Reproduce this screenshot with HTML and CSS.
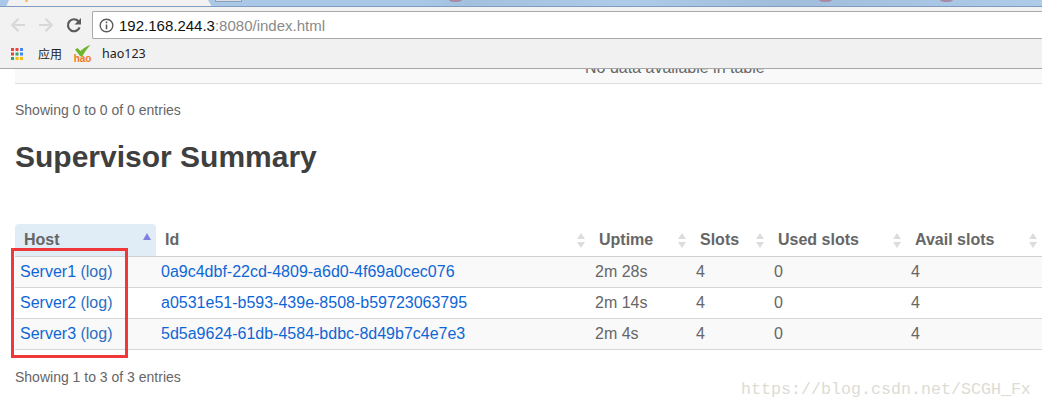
FILE: index.html
```html
<!DOCTYPE html>
<html lang="en">
<head>
<meta charset="utf-8">
<title>Storm UI</title>
<link rel="stylesheet" href="styles.css">
</head>
<body>
<div class="tabstrip">
  <div class="tab"><span class="tab-dot"></span></div>
  <div class="tab-next"></div>
  <div class="blobs"><i></i><i></i><i></i></div>
</div>
<div class="toolbar">
  <svg class="nav" width="20" height="20" viewBox="0 0 20 20"><path d="M17 10H4.500M10.500 3.800 4.200 10l6.300 6.200" fill="none" stroke="#d8d8d8" stroke-width="2.200"/></svg>
  <svg class="nav" width="20" height="20" viewBox="0 0 20 20"><path d="M3 10h12.500M9.500 3.800 15.800 10l-6.300 6.200" fill="none" stroke="#d8d8d8" stroke-width="2.200"/></svg>
  <svg class="nav" width="20" height="20" viewBox="0 0 20 20"><path d="M15.600 12.300A6 6 0 1 1 14.400 6.200L16 7.800" fill="none" stroke="#5a5a5a" stroke-width="2.200"/><path d="M17 3v6.500h-6.500z" fill="#5a5a5a"/></svg>
  <div class="omnibox">
    <svg width="15" height="15" viewBox="0 0 15 15"><circle cx="7.500" cy="7.500" r="6.300" fill="none" stroke="#5a5a5a" stroke-width="1.400"/><path d="M7.500 6.500v4.800M7.500 3.600v1.700" stroke="#5a5a5a" stroke-width="1.600"/></svg>
    <span class="host">192.168.244.3</span><span class="path">:8080/index.html</span>
  </div>
</div>
<div class="bookmarks">
  <svg width="14" height="14" viewBox="0 0 14 14">
    <rect x="1" y="1" width="3" height="3" fill="#e8453c"/><rect x="5.500" y="1" width="3" height="3" fill="#e8453c"/><rect x="10" y="1" width="3" height="3" fill="#4285f4"/>
    <rect x="1" y="5.500" width="3" height="3" fill="#e8453c"/><rect x="5.500" y="5.500" width="3" height="3" fill="#34a853"/><rect x="10" y="5.500" width="3" height="3" fill="#4285f4"/>
    <rect x="1" y="10" width="3" height="3" fill="#34a853"/><rect x="5.500" y="10" width="3" height="3" fill="#fbbc05"/><rect x="10" y="10" width="3" height="3" fill="#fbbc05"/>
  </svg>
  <span class="bm-apps">应用</span>
  <span class="hao-icon">
    <svg width="17" height="11" viewBox="0 0 17 11"><path d="M1 4.500 3.500 3 6.500 6C9 3.500 12.500 1.200 16.500 0 13.500 3 10.500 7 8.500 11H6z" fill="#6cb52d"/></svg>
    <span class="hao-text">hao</span>
  </span>
  <span class="bm-hao">hao123</span>
</div>
<main class="page">
  <div class="prev-table"><span class="nodata">No data available in table</span></div>
  <p class="info info-first">Showing 0 to 0 of 0 entries</p>
  <h2>Supervisor Summary</h2>
  <table>
    <thead>
      <tr>
        <th class="c-host sorted">Host<span class="sort-up"></span></th>
        <th class="c-id">Id<span class="sort"></span></th>
        <th class="c-up">Uptime<span class="sort"></span></th>
        <th class="c-slots">Slots<span class="sort"></span></th>
        <th class="c-used">Used slots<span class="sort"></span></th>
        <th class="c-avail">Avail slots<span class="sort"></span></th>
      </tr>
    </thead>
    <tbody>
      <tr class="odd"><td><a href="#">Server1</a> <a href="#" class="log">(log)</a></td><td><a href="#">0a9c4dbf-22cd-4809-a6d0-4f69a0cec076</a></td><td>2m 28s</td><td>4</td><td>0</td><td>4</td></tr>
      <tr><td><a href="#">Server2</a> <a href="#" class="log">(log)</a></td><td><a href="#">a0531e51-b593-439e-8508-b59723063795</a></td><td>2m 14s</td><td>4</td><td>0</td><td>4</td></tr>
      <tr class="odd"><td><a href="#">Server3</a> <a href="#" class="log">(log)</a></td><td><a href="#">5d5a9624-61db-4584-bdbc-8d49b7c4e7e3</a></td><td>2m 4s</td><td>4</td><td>0</td><td>4</td></tr>
    </tbody>
  </table>
  <p class="info info-last">Showing 1 to 3 of 3 entries</p>
  <div class="redbox"></div>
  <div class="watermark">https://blog.csdn.net/SCGH_Fx</div>
</main>
</body>
</html>
```
FILE: styles.css
```css
* { box-sizing: border-box; }
html, body { margin: 0; padding: 0; }
body { width: 1042px; height: 410px; overflow: hidden; background: #fff; font-family: "Liberation Sans", Arial, sans-serif; position: relative; }

.tabstrip { height: 7px; background: linear-gradient(90deg, #a9c8e8 0 40%, #a3c0de 45%, #aecbea 60%, #a0bedc 75%, #aecbea 100%); border-bottom: 1px solid #7f9cc0; position: relative; overflow: hidden; }
.tab { position: absolute; left: 6px; top: 0; width: 206px; height: 7px; background: #f2f2f2; clip-path: polygon(3px 0, 202px 0, 206px 7px, 0 7px); }
.tab-dot { position: absolute; left: 19px; top: 0; width: 3px; height: 2px; background: #f5b642; border-radius: 50%; }
.tab-next { position: absolute; left: 215px; top: -1px; width: 27px; height: 3px; background: #d6dde6; border: 1px solid #8ea0b8; }
.blobs i { position: absolute; top: -2px; width: 13px; height: 4px; border-radius: 50%; background: #a98aa6; }
.blobs i:nth-child(1) { left: 449px; }
.blobs i:nth-child(2) { left: 819px; }
.blobs i:nth-child(3) { left: 940px; }

.toolbar { height: 32px; background: #f2f2f2; padding: 4px 0 0 8px; display: flex; align-items: flex-start; }
.nav { margin-right: 8px; margin-top: 4px; flex: none; }
.omnibox { flex: 1; height: 28px; background: #fff; border: 1px solid #a9a9a9; border-right: 0; border-radius: 2px 0 0 2px; display: flex; align-items: center; padding-left: 6px; font-size: 15px; }
.omnibox svg { margin-right: 5px; flex: none; }
.host { color: #111; }
.path { color: #8a8a8a; }

.bookmarks { height: 30px; background: #f1f1f1; border-bottom: 1px solid #a8a8a8; display: flex; align-items: center; padding-left: 10px; font-size: 12px; color: #222; }
.bm-apps { margin-left: 14px; font-family: "Noto Sans CJK SC", sans-serif; font-size: 12px; }
.hao-icon { margin-left: 12px; width: 17px; height: 17px; display: flex; flex-direction: column; align-items: center; }
.hao-icon svg { flex: none; }
.hao-text { font-family: "Liberation Sans", sans-serif; font-size: 10px; line-height: 6px; color: #f07a22; font-weight: 700; }
.bm-hao { margin-left: 11px; font-family: "Noto Sans", sans-serif; font-size: 12.500px; }

.page { padding: 0 0 0 15px; position: relative; color: #666; }
.prev-table { height: 15px; background: #f9f9f9; border-bottom: 1px solid #ddd; position: relative; overflow: hidden; }
.nodata { position: absolute; left: 570px; top: -11px; font-size: 16px; line-height: 20px; }
.info { margin: 0; font-size: 14px; line-height: 20px; color: #666; }
.info-first { margin-top: 16px; }
h2 { margin: 20px 0 0; font-size: 30px; line-height: 33px; font-weight: 700; color: #3f3f3f; }

table { border-collapse: collapse; table-layout: fixed; width: 1027px; margin-top: 51px; font-size: 16px; }
th { height: 32px; padding: 0 0 0 9px; text-align: left; font-size: 16px; font-weight: 700; color: #666; position: relative; border-bottom: 1px solid #d0d0d0; }
td { height: 31px; padding: 0 0 0 5px; border-bottom: 1px solid #d6d6d6; color: #666; }
.odd td { background: #f9f9f9; }
a { color: #0e66d6; text-decoration: none; }
a.log { color: #2c6fc4; }
.c-host { width: 141px; }
.c-id { width: 434px; }
.c-up { width: 101px; }
.c-slots { width: 78px; }
.c-used { width: 137px; }
.c-avail { width: 136px; }
th.sorted { background: #e0ecf6; border-radius: 4px 4px 0 0; }
.sort, .sort-up { position: absolute; right: 5px; top: 9px; width: 8px; height: 15px; }
.sort::before, .sort::after, .sort-up::before { content: ""; position: absolute; left: 0; border-left: 4px solid transparent; border-right: 4px solid transparent; }
.sort::before { top: 0; border-bottom: 6px solid #dcdcdc; }
.sort::after { top: 9px; border-top: 6px solid #dcdcdc; }
.sort-up::before { top: 0; border-bottom: 7px solid #8080e0; }
.info-last { margin-top: 17px; }

.redbox { position: absolute; left: 11px; top: 179px; width: 117px; height: 110px; border: 3px solid #f0373a; }
.watermark { position: absolute; left: 741px; top: 311px; font-family: "Liberation Mono", "DejaVu Sans Mono", monospace; font-size: 16.670px; line-height: 20px; color: #dcdcd6; white-space: nowrap; }
```
